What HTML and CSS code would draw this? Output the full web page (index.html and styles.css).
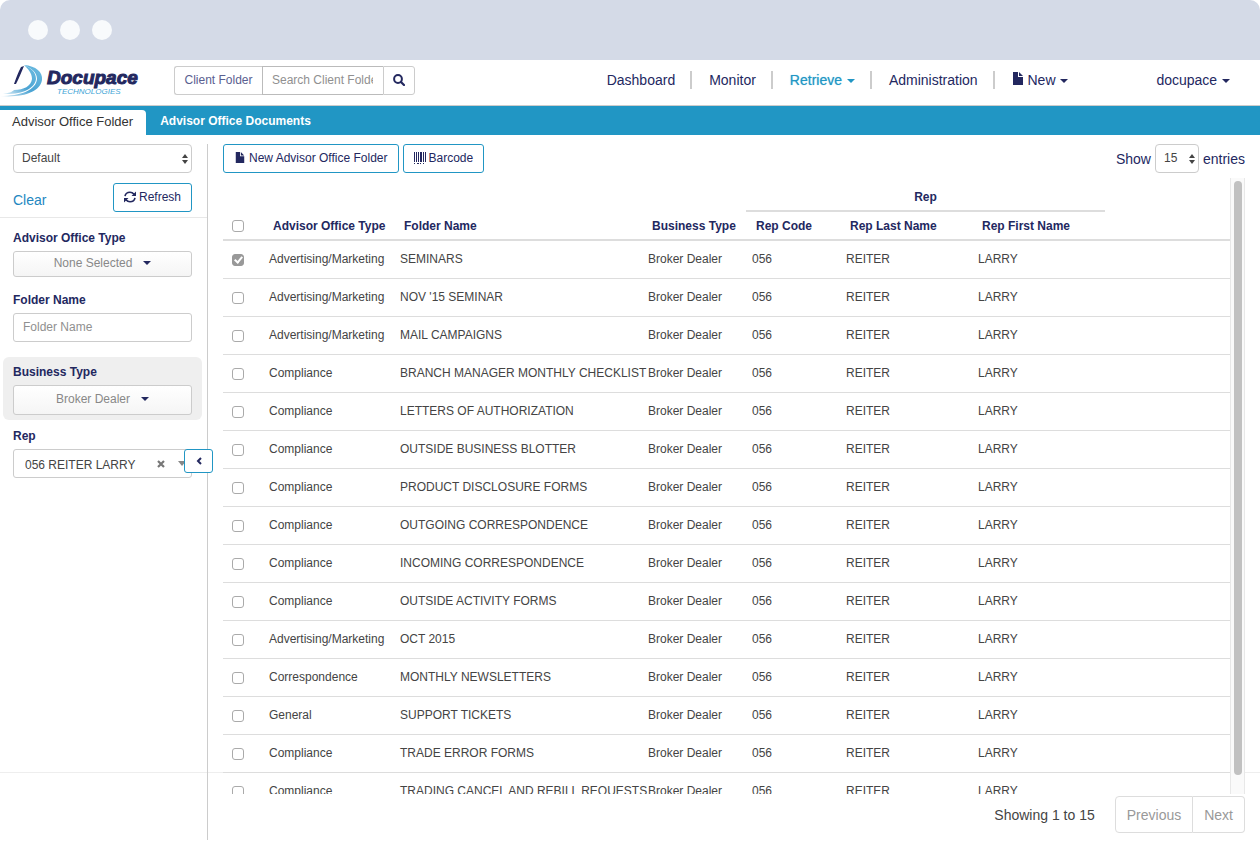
FILE: index.html
```html
<!DOCTYPE html>
<html lang="en">
<head>
<meta charset="utf-8">
<title>Docupace - Advisor Office Folder</title>
<link rel="stylesheet" href="styles.css">
</head>
<body>
<svg class="defs" aria-hidden="true">
  <symbol id="file" viewBox="0 0 10 13"><path d="M0 0h5v5h5v8H0z M6 0l4 4H6z"/></symbol>
  <symbol id="caret" viewBox="0 0 8 4"><path d="M0 0h8L4 4z"/></symbol>
  <symbol id="updown" viewBox="0 0 6 10"><path d="M0 4h6L3 0z M0 6h6L3 10z"/></symbol>
</svg>
<div class="window">
  <div class="titlebar"><span class="dot"></span><span class="dot"></span><span class="dot"></span></div>
  <header class="header">
    <a class="logo" href="#">
      <svg class="logo-mark" viewBox="0 0 44 34" aria-hidden="true">
        <defs>
          <linearGradient id="sail" x1="0" y1="1" x2="1" y2="0"><stop offset="0" stop-color="#e4f2f9"/><stop offset=".45" stop-color="#4aa3d3"/><stop offset="1" stop-color="#6fbde1"/></linearGradient>
        </defs>
        <path fill="url(#sail)" d="M24 1C36 2 43 8 42 16C40 28 23 34 0 32C21 32 36 26 37 15C37 8 31 4 24 1z"/>
        <path fill="url(#sail)" d="M24 1C31 4 36 8 36 15C35 25 21 31 3 30C9 29 12 28 14 26C24 26 31 22 32 15C32 9 28 5 24 1z"/>
        <path fill="#23285f" d="M21 3L24 2C21 9 19 14 16 20L14 20C16 14 18 9 21 3z"/>
      </svg>
      <span class="logo-words"><span class="logo-name">Docupace</span><span class="logo-sub">TECHNOLOGIES</span></span>
    </a>
    <form class="search">
      <button type="button" class="search-scope">Client Folder</button>
      <input class="search-input" type="text" placeholder="Search Client Folder" aria-label="Search Client Folder">
      <button type="button" class="search-go" aria-label="Search"><svg width="12" height="12" viewBox="0 0 12 12"><circle cx="5" cy="5" r="3.9" fill="none" stroke="currentColor" stroke-width="2"/><path d="M8 8l3 3" stroke="currentColor" stroke-width="2.2" stroke-linecap="round"/></svg></button>
    </form>
    <nav class="nav">
      <a href="#">Dashboard</a>
      <a href="#">Monitor</a>
      <a href="#" class="current">Retrieve <svg class="caret"><use href="#caret"/></svg></a>
      <a href="#">Administration</a>
      <a href="#"><svg class="file"><use href="#file"/></svg> New <svg class="caret"><use href="#caret"/></svg></a>
    </nav>
    <a class="account" href="#">docupace <svg class="caret"><use href="#caret"/></svg></a>
  </header>
  <div class="tabs">
    <a class="tab active" href="#">Advisor Office Folder</a>
    <a class="tab" href="#">Advisor Office Documents</a>
  </div>
  <div class="body">
    <aside class="sidebar">
      <div class="presets">
        <div class="select-box"><select class="select" aria-label="Preset"><option>Default</option></select><svg class="updown"><use href="#updown"/></svg></div>
        <div class="preset-actions">
          <a class="clear" href="#">Clear</a>
          <button type="button" class="btn"><svg width="12" height="12" viewBox="0 0 12 12"><g fill="none" stroke="currentColor" stroke-width="1.6"><path d="M1 5.200C1.500 2.800 3.500 1.300 6 1.300C7.600 1.300 9 2 10 3.200"/><path d="M11 6.800C10.500 9.200 8.500 10.700 6 10.700C4.400 10.700 3 10 2 8.800"/></g><path fill="currentColor" d="M12 .5V5H7.500z M0 11.500V7H4.500z"/></svg>Refresh</button>
        </div>
      </div>
      <div class="filters">
        <div class="filter"><span class="label" id="l-type">Advisor Office Type</span>
          <button type="button" class="drop short" aria-labelledby="l-type">None Selected <svg class="caret"><use href="#caret"/></svg></button></div>
        <div class="filter"><label class="label" for="folder">Folder Name</label>
          <input class="field" id="folder" type="text" placeholder="Folder Name"></div>
        <div class="filter set"><span class="label" id="l-biz">Business Type</span>
          <button type="button" class="drop" aria-labelledby="l-biz">Broker Dealer <svg class="caret"><use href="#caret"/></svg></button></div>
        <div class="filter"><label class="label" for="rep">Rep</label>
          <div class="combo">
            <input id="rep" type="text" value="056 REITER LARRY">
            <button type="button" class="combo-clear" aria-label="Clear rep"><svg width="8" height="8" viewBox="0 0 8 8"><path d="M1 1l6 6M7 1l-6 6" stroke="#777" stroke-width="2.2"/></svg></button>
            <svg class="combo-caret" viewBox="0 0 8 5"><path d="M0 0h8L4 5z"/></svg>
            <button type="button" class="collapse" aria-label="Collapse filters"><svg width="6" height="8" viewBox="0 0 6 8"><path d="M5 1L2 4L5 7" fill="none" stroke="currentColor" stroke-width="2"/></svg></button>
          </div></div>
      </div>
    </aside>
    <main class="content">
      <div class="toolbar">
        <button type="button" class="btn"><svg class="file small"><use href="#file"/></svg>New Advisor Office Folder</button>
        <button type="button" class="btn"><svg width="12" height="12" viewBox="0 0 12 12" fill="currentColor"><path d="M0 0h1v10H0z M2 0h1v10H2z M4 0h1v10H4z M6 0h2v10H6z M9 0h1v10H9z M11 0h1v10h-1z M0 11h1v1H0z M3 11h2v1H3z M6 11h1v1H6z M9 11h1v1H9z"/></svg>Barcode</button>
        <label class="length">Show <span class="select-box"><select class="select"><option>15</option></select><svg class="updown"><use href="#updown"/></svg></span> entries</label>
      </div>
      <div class="pane">
        <div class="scroll">
          <table class="grid">
            <colgroup><col class="c-check"><col class="c-type"><col class="c-name"><col class="c-biz"><col class="c-code"><col class="c-last"><col class="c-first"><col></colgroup>
            <thead>
              <tr class="group"><th colspan="4"></th><th colspan="3" class="group-title">Rep</th><th></th></tr>
              <tr class="heads"><th><input type="checkbox" aria-label="Select all"></th><th>Advisor Office Type</th><th>Folder Name</th><th>Business Type</th><th>Rep Code</th><th>Rep Last Name</th><th>Rep First Name</th><th></th></tr>
            </thead>
            <tbody id="rows"></tbody>
          </table>
        </div>
        <div class="track"><div class="thumb"></div></div>
      </div>
      <div class="footer">
        <span class="info">Showing 1 to 15</span>
        <div class="pager"><button type="button">Previous</button><button type="button">Next</button></div>
      </div>
    </main>
  </div>
</div>
<script src="rows.js"></script>
</body>
</html>
```
FILE: rows.js
```js
const folders = [
  ["Advertising/Marketing", "SEMINARS"],
  ["Advertising/Marketing", "NOV '15 SEMINAR"],
  ["Advertising/Marketing", "MAIL CAMPAIGNS"],
  ["Compliance", "BRANCH MANAGER MONTHLY CHECKLIST"],
  ["Compliance", "LETTERS OF AUTHORIZATION"],
  ["Compliance", "OUTSIDE BUSINESS BLOTTER"],
  ["Compliance", "PRODUCT DISCLOSURE FORMS"],
  ["Compliance", "OUTGOING CORRESPONDENCE"],
  ["Compliance", "INCOMING CORRESPONDENCE"],
  ["Compliance", "OUTSIDE ACTIVITY FORMS"],
  ["Advertising/Marketing", "OCT 2015"],
  ["Correspondence", "MONTHLY NEWSLETTERS"],
  ["General", "SUPPORT TICKETS"],
  ["Compliance", "TRADE ERROR FORMS"],
  ["Compliance", "TRADING CANCEL AND REBILL REQUESTS"]
];
document.getElementById("rows").innerHTML = folders.map(([type, name], i) =>
  `<tr><td><input type="checkbox" aria-label="Select ${name}"${i === 0 ? " checked" : ""}></td><td>${type}</td><td>${name}</td><td>Broker Dealer</td><td>056</td><td>REITER</td><td>LARRY</td><td></td></tr>`
).join("");
```
FILE: styles.css
```css
:root { --navy: #23285f; --blue: #2196c4; --line: #ddd; --text: #444; }
* { box-sizing: border-box; }
body { margin: 0; background: #fff; color: var(--text); font: 12px/16px "Liberation Sans", Arial, sans-serif; }
button, input, select { font: inherit; color: inherit; margin: 0; }
button { cursor: pointer; }
a { text-decoration: none; color: inherit; }
svg { flex: none; fill: currentColor; }
.defs { display: none; }
.window { display: flex; flex-direction: column; height: 100vh; overflow: hidden; border-radius: 10px; background: #fff; }

.titlebar { flex: none; display: flex; align-items: center; gap: 12px; height: 60px; padding: 0 28px; background: #d4dae7; }
.dot { width: 20px; height: 20px; border-radius: 50%; background: #f8fafc; }

.header { flex: none; display: flex; align-items: center; height: 46px; padding-right: 30px; padding-bottom: 4px; border-bottom: 1px solid #ccc; color: var(--navy); font-size: 14px; }
.logo { display: flex; align-items: center; width: 174px; }
.logo-mark { width: 44px; height: 34px; }
.logo-words { display: flex; flex-direction: column; padding: 2px 0 0 3px; font-style: italic; }
.logo-name { font-size: 19px; line-height: 20px; font-weight: bold; -webkit-text-stroke: 1px var(--navy); }
.logo-sub { padding-left: 10px; font-size: 8px; line-height: 8px; color: #41a5d6; }
.search { display: flex; height: 29px; font-size: 12px; }
.search > * { background: #fff; border: 1px solid #ccc; }
.search-scope { width: 88px; padding: 0 0 2px; border-right: 0; border-radius: 3px 0 0 3px; color: #5a6090; }
.search-input { width: 121px; padding: 0 10px 2px 9px; border-color: #bbb; border-right: 0; border-radius: 0; }
.search-input::placeholder, .field::placeholder { color: #909090; }
.search-go { display: flex; align-items: center; justify-content: center; width: 32px; padding: 0 0 2px; border-radius: 0 3px 3px 0; color: var(--navy); }
.nav { display: flex; margin-left: auto; }
.nav a { padding: 0 15px 0 17px; line-height: 18px; }
.nav a + a { border-left: 2px solid #ccc; }
.nav a, .account { margin-bottom: 1px; }
.nav .current { color: var(--blue); text-shadow: 0 0 1px #7cc2df; }
.caret { width: 8px; height: 4px; margin-left: 1px; vertical-align: 2px; }
.file { width: 12px; height: 13px; vertical-align: 0; }
.account { margin-left: 73px; }

.tabs { flex: none; display: flex; align-items: flex-end; height: 29px; background: var(--blue); }
.tab { padding: 0 14px; line-height: 27px; color: #fff; font-weight: bold; }
.tab.active { height: 25px; line-height: 24px; padding: 0 13px 0 12px; border-radius: 0 4px 0 0; background: #fff; color: #333; font-size: 13px; font-weight: normal; }

.body { flex: 1; min-height: 0; display: flex; padding: 9px 0 20px; background: linear-gradient(#eee, #eee) 0 calc(100% - 87px) / 100% 1px no-repeat; }
.sidebar { flex: none; width: 208px; border-right: 1px solid #ccc; }
.presets { padding: 0 15px 5px 13px; border-bottom: 1px solid #e8e8e8; }
.select-box { position: relative; display: block; }
.select { appearance: none; display: block; width: 100%; height: 29px; padding: 0 8px 2px; border: 1px solid #ccc; border-radius: 4px; background: #fff; }
.updown { position: absolute; right: 4px; top: 10px; width: 6px; height: 10px; pointer-events: none; }
.preset-actions { display: flex; justify-content: space-between; align-items: center; margin-top: 10px; }
.clear { padding-top: 4px; font-size: 14px; color: #2487bf; }
.btn { display: flex; align-items: center; gap: 3px; height: 29px; padding: 0 10px 2px; border: 1px solid var(--blue); border-radius: 3px; background: #fff; color: var(--navy); }
.filters { padding: 12px 5px 0 3px; }
.filter { padding: 0 10px; margin-bottom: 15px; }
.filter.set { padding: 7px 10px 5px; margin-bottom: 8px; border-radius: 6px; background: #efefef; }
.label { display: block; margin-bottom: 5px; color: var(--navy); font-weight: bold; }
.drop { display: flex; align-items: center; justify-content: center; gap: 10px; width: 100%; height: 30px; padding: 0 0 2px; border: 1px solid #ccc; border-radius: 3px; background: linear-gradient(#fff, #f5f5f5); color: #888; }
.drop.short { height: 26px; }
.drop .caret { color: var(--navy); }
.field { display: block; width: 100%; height: 29px; padding: 0 9px 2px; border: 1px solid #ccc; border-radius: 3px; }
.combo { position: relative; display: flex; align-items: center; height: 29px; padding-left: 11px; border: 1px solid #ccc; border-radius: 3px; }
.combo input { flex: 1; min-width: 0; padding: 2px 0 0; border: 0; background: none; }
.combo-clear { display: flex; padding: 4px; border: 0; background: none; }
.combo-caret { width: 8px; height: 5px; margin: 0 5px 0 9px; color: #888; }
.collapse { position: absolute; right: -22px; top: -1px; display: flex; align-items: center; justify-content: center; width: 29px; height: 24px; padding: 0; border: 1px solid var(--blue); border-radius: 3px; background: #fff; color: var(--navy); }

.content { flex: 1; min-width: 0; display: flex; flex-direction: column; padding: 0 15px; }
.toolbar { display: flex; gap: 4px; }
.file.small { width: 12px; height: 11px; }
.length { display: flex; align-items: center; gap: 4px; margin-left: auto; color: var(--navy); font-size: 14px; }
.length .select-box { width: 44px; font-size: 12px; color: var(--text); }
.pane { flex: 1; min-height: 0; display: flex; margin-top: 5px; background: #fff; }
.scroll { flex: 1; min-width: 0; overflow: hidden; }
.grid { width: 100%; table-layout: fixed; border-collapse: separate; border-spacing: 0; }
.c-check { width: 40px; } .c-type { width: 131px; } .c-name { width: 248px; } .c-biz { width: 104px; }
.c-code { width: 94px; } .c-last { width: 132px; } .c-first { width: 133px; }
.grid th { padding: 0 10px; text-align: left; color: var(--navy); white-space: nowrap; }
.group th { height: 34px; padding-top: 6px; }
.group .group-title { text-align: center; border-bottom: 2px solid var(--line); }
.heads th { height: 29px; border-bottom: 2px solid var(--line); }
.grid td { height: 38px; padding: 0 6px 2px; border-bottom: 1px solid var(--line); white-space: nowrap; }
.grid th:first-child, .grid td:first-child { padding-left: 9px; }
.grid input { appearance: none; display: grid; place-items: center; width: 12px; height: 12px; border: 1px solid #aaa; border-radius: 3px; background: #fff; }
.grid td input { margin-top: 2px; }
.grid input:checked { border-color: #999; background: #999; }
.grid input:checked::after { content: ""; box-sizing: border-box; width: 5px; height: 8px; margin-bottom: 2px; border: solid #fff; border-width: 0 2px 2px 0; transform: rotate(40deg); }
.track { width: 15px; padding: 3px 2px 19px 3px; border: solid #e8e8e8; border-width: 0 1px; background: #fafafa; }
.thumb { height: 100%; border-radius: 4px; background: #c1c1c1; }
.footer { display: flex; justify-content: flex-end; align-items: center; gap: 20px; padding: 2px 0 7px; font-size: 14px; }
.pager { display: flex; }
.pager button { height: 37px; padding: 0 11px; border: 1px solid var(--line); background: #fff; color: #999; }
.pager button:first-child { border-radius: 4px 0 0 4px; }
.pager button:last-child { border-left: 0; border-radius: 0 4px 4px 0; }
```
